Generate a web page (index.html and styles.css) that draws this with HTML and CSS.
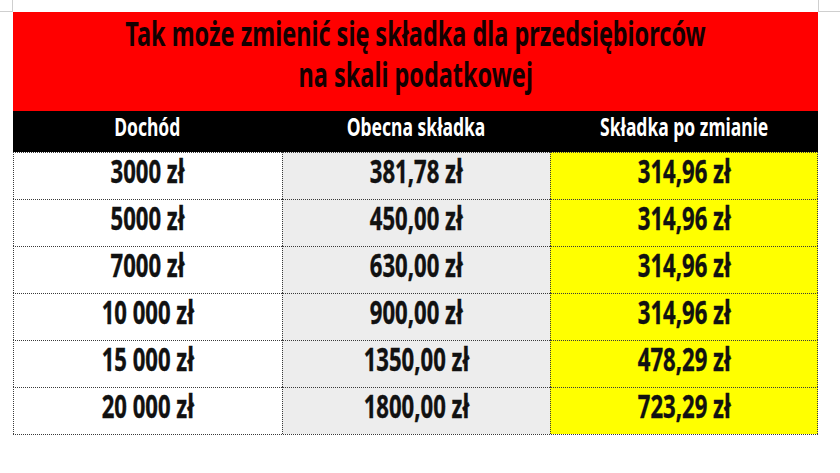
FILE: index.html
```html
<!DOCTYPE html>
<html lang="pl">
<head>
<meta charset="utf-8">
<title>Składka dla przedsiębiorców</title>
<link rel="stylesheet" href="styles.css">
</head>
<body>
<div class="page">
  <div class="sheet">
    <div class="title">
      <div class="tline"><span class="tx">Tak może zmienić się składka dla przedsiębiorców</span></div>
      <div class="tline"><span class="tx">na skali podatkowej</span></div>
    </div>
    <div class="grid">
      <div class="th"><span class="hx">Dochód</span></div>
      <div class="th"><span class="hx">Obecna składka</span></div>
      <div class="th"><span class="hx">Składka po zmianie</span></div>

      <div class="td c1"><span class="bx">3000 zł</span></div>
      <div class="td c2"><span class="bx">381,78 zł</span></div>
      <div class="td c3"><span class="bx">314,96 zł</span></div>

      <div class="td c1"><span class="bx">5000 zł</span></div>
      <div class="td c2"><span class="bx">450,00 zł</span></div>
      <div class="td c3"><span class="bx">314,96 zł</span></div>

      <div class="td c1"><span class="bx">7000 zł</span></div>
      <div class="td c2"><span class="bx">630,00 zł</span></div>
      <div class="td c3"><span class="bx">314,96 zł</span></div>

      <div class="td c1"><span class="bx">10 000 zł</span></div>
      <div class="td c2"><span class="bx">900,00 zł</span></div>
      <div class="td c3"><span class="bx">314,96 zł</span></div>

      <div class="td c1"><span class="bx">15 000 zł</span></div>
      <div class="td c2"><span class="bx">1350,00 zł</span></div>
      <div class="td c3"><span class="bx">478,29 zł</span></div>

      <div class="td c1"><span class="bx">20 000 zł</span></div>
      <div class="td c2"><span class="bx">1800,00 zł</span></div>
      <div class="td c3"><span class="bx">723,29 zł</span></div>
    </div>
  </div>
</div>
</body>
</html>
```
FILE: styles.css
```css
html, body {
  margin: 0;
  padding: 0;
  background: #ffffff;
}

body {
  width: 840px;
  height: 473px;
  overflow: hidden;
  font-family: "Noto Sans", "DejaVu Sans", sans-serif;
  font-weight: 700;
}

.page {
  position: relative;
  padding: 12px 0 0 13px;
}

/* corner crop marks */
.page::before,
.page::after {
  content: "";
  position: absolute;
  top: 0;
  height: 11px;
  border-bottom: 1px solid #cfcfcf;
}
.page::before {
  left: 0;
  width: 12px;
  border-right: 1px solid #cfcfcf;
}
.page::after {
  left: 818px;
  width: 22px;
  border-left: 1px solid #cfcfcf;
}

.sheet {
  width: 805px;
}

.title {
  height: 99px;
  box-sizing: border-box;
  background: #ff0000;
  color: #140000;
  font-size: 34px;
  line-height: 41px;
  padding-top: 1px;
}

.tline {
  display: flex;
  justify-content: center;
  height: 41px;
  white-space: nowrap;
}

.tx {
  display: inline-block;
  flex: none;
  transform: scaleX(0.69);
}

.grid {
  display: grid;
  grid-template-columns: 269px 268px 268px;
  border-bottom: 1px dotted #3a3a3a;
}

.th {
  height: 41px;
  background: #000000;
  color: #ffffff;
  font-size: 25px;
  line-height: 31px;
  text-align: center;
  white-space: nowrap;
}

.hx {
  display: inline-block;
  transform: scaleX(0.7);
}

.td {
  height: 47px;
  box-sizing: border-box;
  border-top: 1px dotted #3a3a3a;
  font-size: 32px;
  line-height: 35px;
  text-align: center;
  color: #111111;
  white-space: nowrap;
  -webkit-text-stroke: 0.4px #111111;
}

.bx {
  display: inline-block;
  transform: scaleX(0.69);
}

.c1 {
  background: #ffffff;
  border-left: 1px dotted #3a3a3a;
}

.c2 {
  background: #ededed;
  border-left: 1px dotted #3a3a3a;
}

.c3 {
  background: #ffff00;
  border-left: 1px dotted #3a3a3a;
  border-right: 1px dotted #3a3a3a;
}
```
